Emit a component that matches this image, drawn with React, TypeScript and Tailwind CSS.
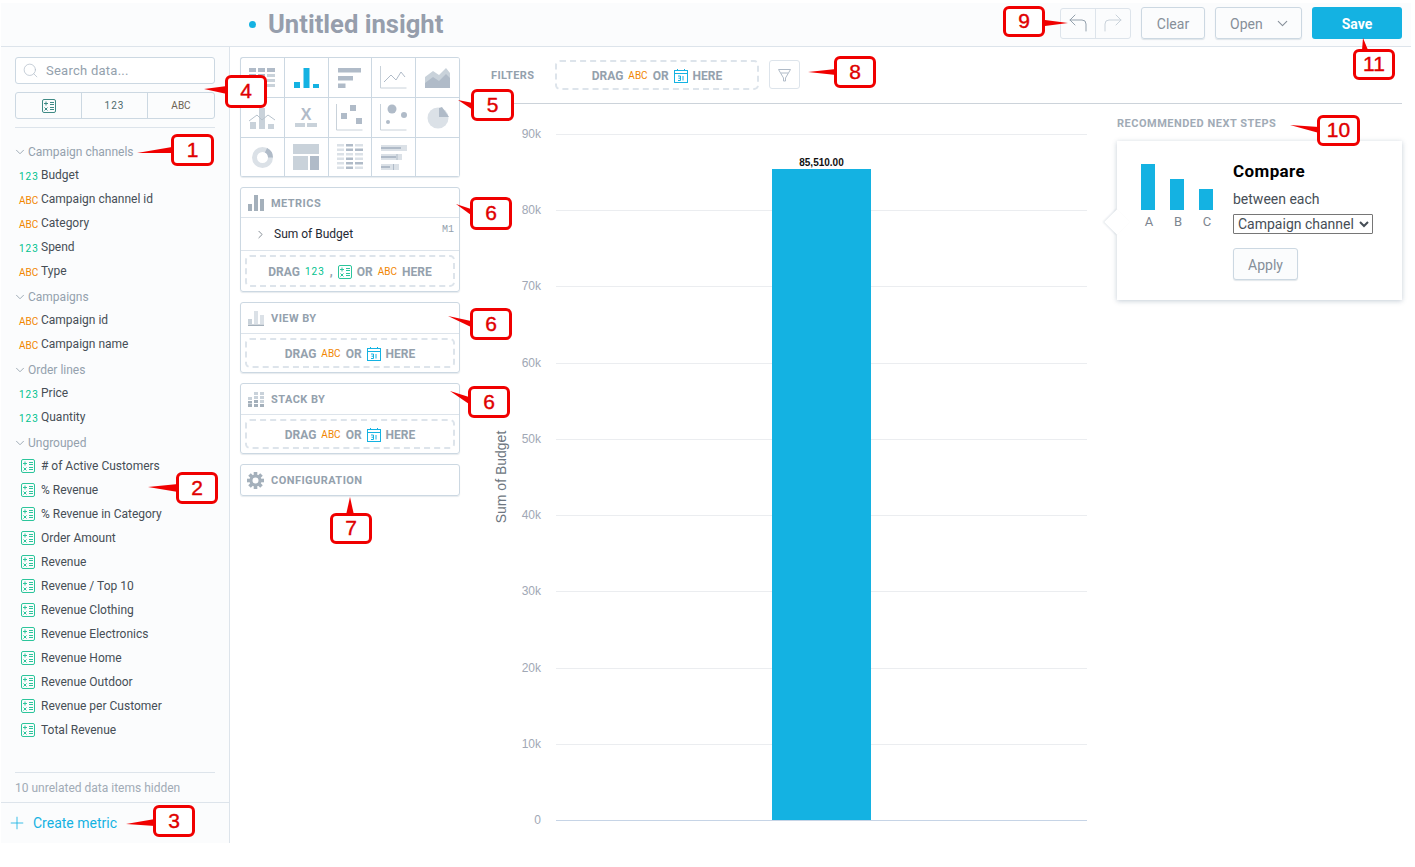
import React from 'react';
import { Search, Plus, ChevronDown, ChevronRight, CornerUpLeft, CornerUpRight } from 'lucide-react';

const COLORS = { blue: '#14b2e2', green: '#00c18d', orange: '#f18600', grey: '#b0bbc8' };

function NumTag({ className = '' }: { className?: string }) {
  return <span className={`inline-block text-[10px] leading-none font-normal tracking-[1px] text-[#00c18d] ${className}`}>123</span>;
}

function AbcTag({ className = '' }: { className?: string }) {
  return <span className={`inline-block text-[10px] leading-none font-normal text-[#f18600] ${className}`}>ABC</span>;
}

function MetricIcon({ color = '#2cc59b', size = 14 }: { color?: string; size?: number }) {
  return (
    <svg width={size} height={size} viewBox="0 0 14 14" fill="none" stroke={color} strokeWidth="1">
      <rect x="0.5" y="0.5" width="13" height="13" rx="1.5" />
      <path d="M2 4.500h4M4 2.500v4M8 3.500h4M8 5.500h4M2.500 8.500l3 3M5.500 8.500l-3 3M8 8.500h4M8 10.500h4" />
    </svg>
  );
}

function CalendarIcon() {
  return (
    <svg width="14" height="14" viewBox="0 0 14 14" fill="none" stroke={COLORS.blue}>
      <rect x="0.5" y="1.500" width="13" height="12" />
      <path d="M0.500 4.500h13M3.500 0v2M10.500 0v2" />
      <path d="M4 7h2.500v4.500H4M4.500 9.200h2M9 7v4.500" />
    </svg>
  );
}

function GearIcon() {
  const angles = [0, 45, 90, 135, 180, 225, 270, 315];
  return (
    <svg width="17" height="17" viewBox="0 0 17 17" fill="#a4b0bb">
      {angles.map((a) => <rect key={a} x="6.700" y="0" width="3.600" height="4" transform={`rotate(${a} 8.500 8.500)`} />)}
      <circle cx="8.500" cy="8.500" r="4.500" fill="none" stroke="#a4b0bb" strokeWidth="3" />
    </svg>
  );
}

function DataRow({ kind, label }: { kind: 'num' | 'abc'; label: string }) {
  return (
    <div className="h-6 flex items-center pl-[4px] text-[12px] text-[#464e56]">
      <span className="w-[22px] shrink-0 pt-[2px]">{kind === 'num' ? <NumTag /> : <AbcTag />}</span>
      <span>{label}</span>
    </div>
  );
}

function MetricRow({ label }: { label: string }) {
  return (
    <div className="h-6 flex items-center pl-[6px] text-[12px] text-[#464e56]">
      <span className="w-[20px] shrink-0 flex"><MetricIcon /></span>
      <span>{label}</span>
    </div>
  );
}

function GroupHeader({ label }: { label: string }) {
  return (
    <div className="h-[22px] mt-[3px] first:mt-0 flex items-center text-[12px] text-[#94a1ad]">
      <ChevronDown size={14} strokeWidth={1.5} className="-ml-[2px] mr-[1px] text-[#94a1ad]" />
      <span>{label}</span>
    </div>
  );
}

const ungrouped = [
  '# of Active Customers', '% Revenue', '% Revenue in Category', 'Order Amount', 'Revenue', 'Revenue / Top 10',
  'Revenue Clothing', 'Revenue Electronics', 'Revenue Home', 'Revenue Outdoor', 'Revenue per Customer', 'Total Revenue',
];

function Sidebar() {
  return (
    <aside className="w-[228px] shrink-0 border-r border-[#dde4eb] box-content flex flex-col bg-[#fbfcfd]">
      <div className="px-[14px] pt-[10px] flex-1 min-h-0 flex flex-col">
        <div className="h-[27px] flex items-center border border-[#ccd8e2] rounded-[3px] bg-white text-[13px] tracking-[0.25px] text-[#94a1ad] pl-[6px]">
          <Search size={17} strokeWidth={1} className="text-[#b0bbc8] mr-[7px]" />
          <span>Search data...</span>
        </div>
        <div className="mt-[8px] h-[27px] grid grid-cols-3 border border-[#ccd8e2] rounded-[3px] divide-x divide-[#ccd8e2]">
          <div className="flex items-center justify-center"><MetricIcon color="#3f8a85" /></div>
          <div className="flex items-center justify-center text-[10px] tracking-[1px] text-[#4d6a6d]">123</div>
          <div className="flex items-center justify-center text-[10px] text-[#6d6252]">ABC</div>
        </div>
        <div className="mt-[8px] border-t border-[#dde4eb] pt-[13px]">
          <GroupHeader label="Campaign channels" />
          <DataRow kind="num" label="Budget" />
          <DataRow kind="abc" label="Campaign channel id" />
          <DataRow kind="abc" label="Category" />
          <DataRow kind="num" label="Spend" />
          <DataRow kind="abc" label="Type" />
          <GroupHeader label="Campaigns" />
          <DataRow kind="abc" label="Campaign id" />
          <DataRow kind="abc" label="Campaign name" />
          <GroupHeader label="Order lines" />
          <DataRow kind="num" label="Price" />
          <DataRow kind="num" label="Quantity" />
          <GroupHeader label="Ungrouped" />
          {ungrouped.map((m) => <MetricRow key={m} label={m} />)}
        </div>
      </div>
      <div className="mx-[14px] border-t border-[#dde4eb] h-[30px] flex items-center text-[12px] text-[#a1abb6]">10 unrelated data items hidden</div>
      <div className="h-[41px] border-t border-[#dde4eb] flex items-center pl-[6px] text-[14px] text-[#14b2e2]">
        <Plus size={20} strokeWidth={1} className="mr-[6px]" />
        <span>Create metric</span>
      </div>
    </aside>
  );
}

function Header() {
  return (
    <header className="h-[44px] shrink-0 border-b border-[#dde4eb] bg-[#fbfcfd] flex items-center pl-[248px] pr-[9px]">
      <span className="w-[7px] h-[7px] rounded-full bg-[#14b2e2] mr-[12px]" />
      <h1 className="text-[25.6px] font-bold text-[#969eac] leading-none">Untitled insight</h1>
      <div className="ml-auto mb-[3px] flex items-start">
        <div className="flex mt-[1px] h-[31px] border border-[#dde4eb] rounded-[3px] divide-x divide-[#dde4eb] bg-[#fbfcfd]">
          <div className="w-[35px] flex items-center justify-center pb-[2px]"><CornerUpLeft size={24} strokeWidth={1} className="text-[#94a1ad]" /></div>
          <div className="w-[34px] flex items-center justify-center pb-[2px]"><CornerUpRight size={24} strokeWidth={1} className="text-[#c9d2da]" /></div>
        </div>
        <div className="ml-[10px] w-[64px] h-[32px] pt-[2px] flex items-center justify-center border border-[#ccd8e2] rounded-[3px] shadow-[0_1px_1px_rgba(20,56,93,0.12)] text-[14px] text-[#868f99]">Clear</div>
        <div className="ml-[10px] w-[87px] h-[32px] pt-[2px] flex items-center pl-[14px] border border-[#ccd8e2] rounded-[3px] shadow-[0_1px_1px_rgba(20,56,93,0.12)] text-[14px] text-[#868f99]">
          <span>Open</span>
          <ChevronDown size={17} strokeWidth={1.5} className="ml-[11px] -mt-[2px] text-[#868f99]" />
        </div>
        <div className="ml-[10px] w-[90px] h-[32px] pt-[2px] flex items-center justify-center rounded-[3px] bg-[#14b2e2] text-[14px] font-bold text-white">Save</div>
      </div>
    </header>
  );
}

function ChartTypes() {
  const common = 'flex items-center justify-center border-r border-b border-[#ccd8e2]';
  const g = '#c9d2da';
  const m = '#b0bbc8';
  const icons: React.ReactNode[] = [
    <svg key="table" width="26" height="20" viewBox="0 0 26 20" fill={g}><rect width="7" height="4" fill={m} /><rect x="9" width="7" height="4" fill={m} /><rect x="18" width="8" height="4" fill={m} /><rect y="6" width="7" height="3" fill={m} /><rect x="9" y="6" width="7" height="3" fill={m} /><rect x="18" y="6" width="8" height="3" /><rect y="11" width="7" height="3" /><rect x="9" y="11" width="7" height="3" /><rect x="18" y="11" width="8" height="3" /><rect y="16" width="7" height="3" /><rect x="9" y="16" width="7" height="3" /><rect x="18" y="16" width="8" height="3" /></svg>,
    <svg key="col" width="25" height="20" viewBox="0 0 25 20" fill={COLORS.blue}><rect y="14" width="6" height="6" /><rect x="9.500" width="6" height="20" /><rect x="19" y="16" width="6" height="4" /></svg>,
    <svg key="bar" width="23" height="20" viewBox="0 0 23 20" fill={m}><rect width="23" height="4.500" /><rect y="8" width="15" height="4.500" /><rect y="15.500" width="7.500" height="4.500" /></svg>,
    <svg key="line" width="27" height="23" viewBox="0 0 27 23" fill="none"><path d="M0.500 0v22h26" stroke={g} /><path d="M4 16l7-7 5 5 5-8 4 5" stroke={m} /></svg>,
    <svg key="area" width="25" height="20" viewBox="0 0 25 20"><path d="M0 9l8-6 6 4 7-7 4 5v15H0z" fill={g} /><path d="M0 15l8-6 6 4 7-7 4 4v10H0z" fill={m} /></svg>,
    <svg key="combo" width="27" height="22" viewBox="0 0 27 22"><rect x="1" y="15" width="6" height="7" fill={g} /><rect x="10" y="1" width="6" height="21" fill={g} /><rect x="19" y="17" width="6" height="5" fill={g} /><path d="M0 14l8-6 5 5 6-5 7 5" stroke="#b7c2cc" fill="none" /></svg>,
    <svg key="headline" width="22" height="21" viewBox="0 0 22 21" className="overflow-visible"><text x="11" y="13" fontSize="16" fontWeight="700" textAnchor="middle" fontFamily="Liberation Sans" fill={m}>X</text><rect y="16" width="10" height="4" fill={g} /><rect x="12" y="16" width="10" height="4" fill={g} /></svg>,
    <svg key="scatter" width="27" height="27" viewBox="0 0 27 27" fill={m}><path d="M0.500 0v26h26" stroke={g} fill="none" /><rect x="5" y="9" width="6" height="6" /><rect x="14" y="1" width="6" height="6" /><rect x="20" y="14" width="6" height="6" /></svg>,
    <svg key="bubble" width="27" height="27" viewBox="0 0 27 27" fill={m}><path d="M0.500 0v26h26" stroke={g} fill="none" /><circle cx="12" cy="5" r="4.500" /><circle cx="24" cy="11" r="3" /><circle cx="8" cy="18" r="2" /></svg>,
    <svg key="pie" width="22" height="22" viewBox="0 0 22 22"><circle cx="11" cy="11" r="10.500" fill="#dbe1e7" /><path d="M12 10V1l3-1 7 10z" fill={m} /></svg>,
    <svg key="donut" width="21" height="21" viewBox="0 0 21 21" fill="none"><circle cx="10.500" cy="10.500" r="8" stroke="#dbe1e7" strokeWidth="5" /><path d="M14 3.300a8 8 0 0 1 4.500 7.200" stroke={m} strokeWidth="5" /></svg>,
    <svg key="tree" width="26" height="26" viewBox="0 0 26 26" fill="#c9d2da"><rect width="26" height="10" /><rect y="12" width="15" height="14" /><rect x="17" y="12" width="9" height="14" fill={m} /></svg>,
    <svg key="heat" width="26" height="26" viewBox="0 0 26 26" fill="#dbe1e7"><rect width="7" height="2.500" /><rect x="9" width="7" height="2.500" fill={m} /><rect x="18" width="8" height="2.500" /><rect y="4.500" width="7" height="2.500" /><rect x="9" y="4.500" width="7" height="2.500" fill={m} /><rect x="18" y="4.500" width="8" height="2.500" fill={m} /><rect y="9" width="7" height="2.500" /><rect x="9" y="9" width="7" height="2.500" /><rect x="18" y="9" width="8" height="2.500" /><rect y="13.500" width="7" height="2.500" /><rect x="9" y="13.500" width="7" height="2.500" fill={m} /><rect x="18" y="13.500" width="8" height="2.500" /><rect y="18" width="7" height="2.500" /><rect x="9" y="18" width="7" height="2.500" fill={m} /><rect x="18" y="18" width="8" height="2.500" fill={m} /><rect y="22.500" width="7" height="2.500" /><rect x="9" y="22.500" width="7" height="2.500" fill={m} /><rect x="18" y="22.500" width="8" height="2.500" /></svg>,
    <svg key="bullet" width="26" height="26" viewBox="0 0 26 26" fill="#dbe1e7"><rect y="1" width="26" height="6" /><rect y="3" width="20" height="2" fill={m} /><rect y="10" width="21" height="6" /><rect y="12" width="15" height="2" fill={m} /><rect x="15.500" y="10" width="1" height="6" fill={m} /><rect y="20" width="18" height="6" /><rect y="22" width="9" height="2" fill={m} /><rect x="12" y="20" width="1" height="6" fill={m} /></svg>,
    null,
  ];
  return (
    <div className="w-[220px] h-[120px] grid grid-cols-5 grid-rows-[40px_40px_39px] border-t border-l border-[#ccd8e2] rounded-[3px] shadow-[0_1px_1px_rgba(20,56,93,0.1)] overflow-hidden">
      {icons.map((icon, i) => <div key={i} className={common}>{icon}</div>)}
    </div>
  );
}

function Bucket({ icon, title, headerClass = 'h-[30px]', children }: { icon: React.ReactNode; title: string; headerClass?: string; children?: React.ReactNode }) {
  return (
    <section className="mt-[10px] border border-[#ccd8e2] rounded-[3px] shadow-[0_1px_1px_rgba(20,56,93,0.1)]">
      <div className={`${headerClass} flex items-center pl-[6px] text-[11px] font-bold tracking-[0.45px] text-[#94a1ad] gap-[7px]`}>
        <span className="w-[17px] flex justify-center">{icon}</span>
        <span className="pt-[3px]">{title}</span>
      </div>
      {children}
    </section>
  );
}

function DropZone({ className = 'h-[30px]', children }: { className?: string; children: React.ReactNode }) {
  return (
    <div className={`mx-[4px] my-[4px] ${className} border-2 border-dashed border-[#dde4eb] rounded-[5px] flex items-center justify-center gap-[5px] pt-[1px] text-[12px] font-bold text-[#94a1ad]`}>
      {children}
    </div>
  );
}

function Config() {
  const g = '#c9d2da';
  return (
    <div className="w-[220px] shrink-0">
      <ChartTypes />
      <Bucket
        title="METRICS"
        headerClass="h-[29px]"
        icon={<svg width="16" height="16" viewBox="0 0 16 16" fill="#a4b0bb"><rect y="9" width="4" height="7" /><rect x="6" width="4" height="16" /><rect x="12" y="4" width="4" height="12" /></svg>}
      >
        <div className="h-[34px] border-y border-[#dde4eb] bg-white flex items-center pl-[13px] relative text-[12px] text-[#1f2933]">
          <ChevronRight size={13} strokeWidth={1.5} className="text-[#6d7680] mr-[7px]" />
          <span>Sum of Budget</span>
          <span className="absolute right-[5px] top-[7px] text-[10px] leading-none font-['Liberation_Mono'] text-[#94a1ad]">M1</span>
        </div>
        <DropZone className="h-[32px]">
          <span>DRAG</span><NumTag /><span>,</span><MetricIcon /><span>OR</span><AbcTag /><span>HERE</span>
        </DropZone>
      </Bucket>
      <Bucket
        title="VIEW BY"
        icon={<svg width="16" height="15" viewBox="0 0 16 15"><rect x="0" y="8" width="4" height="5" fill={g} /><rect x="6" y="0" width="4" height="13" fill="#dbe1e7" /><rect x="12" y="4" width="4" height="9" fill="#dbe1e7" /><rect y="13.500" width="16" height="1.500" fill="#a4b0bb" /></svg>}
      >
        <div className="border-t border-[#dde4eb]">
          <DropZone><span>DRAG</span><AbcTag /><span>OR</span><CalendarIcon /><span>HERE</span></DropZone>
        </div>
      </Bucket>
      <Bucket
        title="STACK BY"
        icon={<svg width="16" height="15" viewBox="0 0 16 15" fill="#a4b0bb"><rect y="5" width="4" height="3" fill={g} /><rect y="9" width="4" height="2.500" /><rect y="12" width="4" height="3" /><rect x="6" width="4" height="3" fill={g} /><rect x="6" y="4" width="4" height="3" fill={g} /><rect x="6" y="8" width="4" height="3" /><rect x="6" y="12" width="4" height="3" /><rect x="12" y="0" width="4" height="3" fill={g} /><rect x="12" y="4" width="4" height="3" fill={g} /><rect x="12" y="8" width="4" height="3" fill={g} /><rect x="12" y="12" width="4" height="3" /></svg>}
      >
        <div className="border-t border-[#dde4eb]">
          <DropZone><span>DRAG</span><AbcTag /><span>OR</span><CalendarIcon /><span>HERE</span></DropZone>
        </div>
      </Bucket>
      <Bucket title="CONFIGURATION" icon={<GearIcon />} />
    </div>
  );
}

function FilterBar() {
  return (
    <div className="h-[57px] ml-[10px] mr-[9px] border-b border-[#ccd3da] flex items-start pl-[21px]">
      <span className="mt-[22px] text-[11px] font-bold tracking-[0.35px] leading-[13px] text-[#94a1ad] w-[64px]">FILTERS</span>
      <div className="mt-[13px] w-[204px] h-[30px] border-2 border-dashed border-[#dde4eb] rounded-[5px] flex items-center justify-center gap-[5px] pt-[1px] text-[12px] font-bold text-[#94a1ad]">
        <span>DRAG</span><AbcTag /><span>OR</span><CalendarIcon /><span>HERE</span>
      </div>
      <div className="mt-[13px] ml-[10px] w-[31px] h-[29px] border border-[#dde4eb] rounded-[3px] flex items-center justify-center">
        <svg width="13" height="14" viewBox="0 0 13 14" fill="none" stroke="#b0bbc8"><path d="M0.500 1.500h12L7.500 10v3h-2v-3z" /><path d="M3 5h7" /></svg>
      </div>
    </div>
  );
}

const ticks = [
  { y: 134, label: '90k' }, { y: 210, label: '80k' }, { y: 286, label: '70k' }, { y: 363, label: '60k' }, { y: 439, label: '50k' },
  { y: 515, label: '40k' }, { y: 591, label: '30k' }, { y: 668, label: '20k' }, { y: 744, label: '10k' },
];

function Chart() {
  // svg origin is page (470, 104), ticks above are page coordinates
  return (
    <svg width="630" height="739" viewBox="470 104 630 739" className="shrink-0 ml-[10px] font-['Liberation_Sans']">
      {ticks.map((t) => (
        <g key={t.label}>
          <line x1="556" x2="1087" y1={t.y + 0.5} y2={t.y + 0.5} stroke="#ebedf0" />
          <text x="541" y={t.y + 4} fontSize="12" fill="#a1a8b5" textAnchor="end">{t.label}</text>
        </g>
      ))}
      <text x="541" y="824" fontSize="12" fill="#a1a8b5" textAnchor="end">0</text>
      <line x1="556" x2="1087" y1="820.5" y2="820.5" stroke="#c6d4e6" />
      <rect x="772" y="169" width="99" height="651" fill="#14b2e2" />
      <text x="821.500" y="166" fontSize="10" fontWeight="700" fill="#111" textAnchor="middle">85,510.00</text>
      <text x="0" y="0" fontSize="14" fill="#6d7680" textAnchor="middle" transform="translate(506 477) rotate(-90)">Sum of Budget</text>
    </svg>
  );
}

function Recommended() {
  return (
    <div className="ml-[17px] w-[285px] shrink-0 pt-[13px]">
      <div className="text-[11px] font-bold tracking-[0.5px] leading-[13px] text-[#a1abb6]">RECOMMENDED NEXT STEPS</div>
      <div className="relative mt-[11px] h-[159px] bg-white shadow-[0_1px_5px_rgba(20,56,93,0.25)] flex pl-[24px] pt-[23px]">
        <span className="absolute left-[-9px] top-[72px] w-[18px] h-[18px] rotate-45 bg-white shadow-[-1px_1px_2px_rgba(20,56,93,0.12)]" />
        <div className="relative w-[92px] shrink-0">
          <div className="flex items-end gap-[15px] h-[46px]">
            <span className="w-[14px] h-[46px] bg-[#14b2e2]" />
            <span className="w-[14px] h-[31px] bg-[#14b2e2]" />
            <span className="w-[14px] h-[21px] bg-[#14b2e2]" />
          </div>
          <div className="flex gap-[15px] mt-[5px] pl-[1px] text-[13px] leading-[14px] text-[#7d8690]">
            <span className="w-[14px] text-center">A</span>
            <span className="w-[14px] text-center">B</span>
            <span className="w-[14px] text-center">C</span>
          </div>
        </div>
        <div className="-mt-[3px]">
          <div className="text-[17px] font-bold tracking-[0.4px] leading-[20px] text-black">Compare</div>
          <div className="mt-[10px] text-[14px] leading-[16px] text-[#464e56]">between each</div>
          <select className="block mt-[7px] w-[140px] h-[20px] border border-[#767676] rounded-[1px] text-[14px] text-[#464e56] bg-white">
            <option>Campaign channel</option>
          </select>
          <div className="mt-[14px] w-[65px] h-[32px] pt-[2px] flex items-center justify-center border border-[#ccd8e2] rounded-[3px] bg-[#fbfcfd] shadow-[0_1px_1px_rgba(20,56,93,0.12)] text-[14px] text-[#868f99]">Apply</div>
        </div>
      </div>
    </div>
  );
}

const tips = [
  '137,153 172,147 172,153',
  '148,487 178,484 178,492',
  '126,824 155,819 155,826',
  '204,89 227,86 227,94',
  '458,100 473,103 473,110',
  '456,204 471,209 471,215',
  '448,316 471,321 471,327',
  '450,391 469,397 469,404',
  '350,497 346,515 354,515',
  '808,72 836,69 836,75',
  '1068,23 1045,20 1045,26',
  '1290,125 1319,127 1319,133',
  '1363,38 1362,50 1368,50',
];

function Callouts() {
  return (
    <>
      <svg width="1415" height="867" className="absolute inset-0 pointer-events-none">
        {tips.map((p) => <polygon key={p} points={p} fill="#f00000" />)}
      </svg>
      <Callout className="left-[171px] top-[134px] w-[43px] h-[32px]" n="1" />
      <Callout className="left-[176px] top-[472px] w-[42px] h-[32px]" n="2" />
      <Callout className="left-[153px] top-[805px] w-[42px] h-[32px]" n="3" />
      <Callout className="left-[225px] top-[75px] w-[42px] h-[33px]" n="4" />
      <Callout className="left-[471px] top-[89px] w-[43px] h-[32px]" n="5" />
      <Callout className="left-[470px] top-[197px] w-[42px] h-[33px]" n="6" />
      <Callout className="left-[470px] top-[308px] w-[42px] h-[32px]" n="6" />
      <Callout className="left-[468px] top-[386px] w-[42px] h-[32px]" n="6" />
      <Callout className="left-[330px] top-[513px] w-[42px] h-[31px]" n="7" />
      <Callout className="left-[834px] top-[56px] w-[42px] h-[32px]" n="8" />
      <Callout className="left-[1003px] top-[6px] w-[42px] h-[31px]" n="9" />
      <Callout className="left-[1317px] top-[115px] w-[43px] h-[31px]" n="10" />
      <Callout className="left-[1353px] top-[49px] w-[42px] h-[31px]" n="11" />
    </>
  );
}

function Callout({ className, n }: { className: string; n: string }) {
  return (
    <div className={`absolute ${className} flex items-center justify-center pb-[2px] bg-white border-[3px] border-[#f00000] rounded-[6px] font-['Liberation_Sans'] text-[21px] leading-none text-[#e00000] [-webkit-text-stroke:0.4px_#e00000]`}>
      {n}
    </div>
  );
}

export default function App() {
  return (
    <div className="relative w-[1415px] h-[867px] bg-white overflow-hidden font-['Roboto',sans-serif]">
      <div className="absolute left-[1px] top-[3px] w-[1410px] h-[840px] flex flex-col bg-white">
        <Header />
        <div className="flex flex-1 min-h-0">
          <Sidebar />
          <main className="flex-1 min-w-0 flex">
            <div className="pl-[10px] pt-[10px]"><Config /></div>
            <div className="flex-1 min-w-0 flex flex-col">
              <FilterBar />
              <div className="flex flex-1 min-h-0">
                <Chart />
                <Recommended />
              </div>
            </div>
          </main>
        </div>
      </div>
      <Callouts />
    </div>
  );
}
